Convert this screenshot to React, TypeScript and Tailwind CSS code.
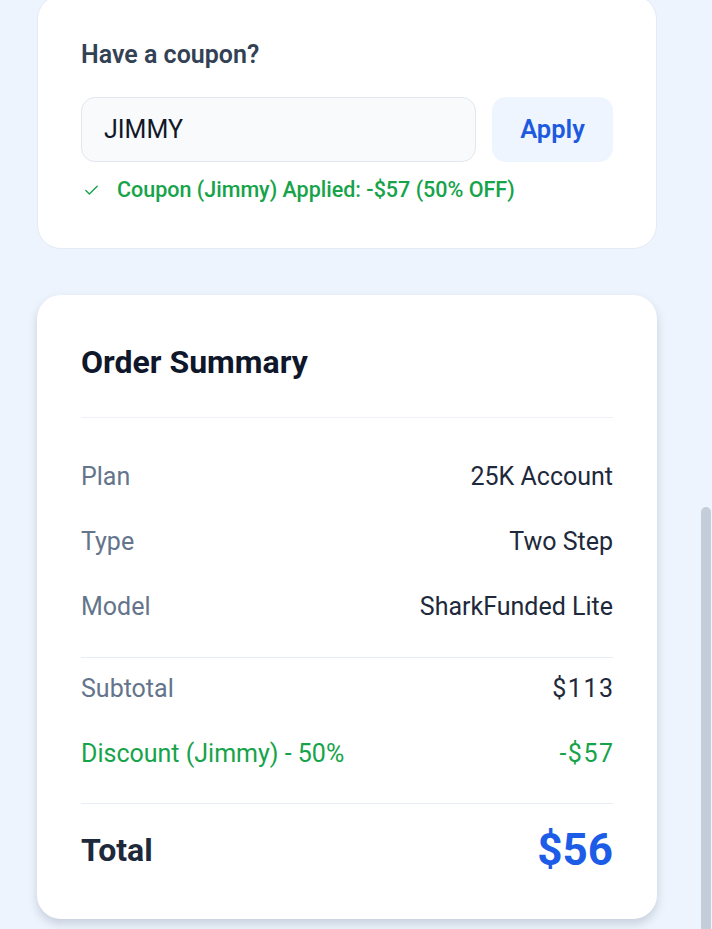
import { Check } from "lucide-react";

function Row({ label, value, tone = "default" }: { label: string, value: string, tone?: "default" | "green" }) {
  const green = tone === "green";
  return (
    <div className="flex justify-between items-center text-[25px] leading-[32px]">
      <p className={green ? "text-[#16a34a]" : "text-[#64748b]"}>{label}</p>
      <p className={green ? "text-[#16a34a]" : "text-[#1e293b]"}>{value}</p>
    </div>
  );
}

export default function App() {
  return (
    <div className="relative h-[929px] overflow-hidden bg-[#edf4fd] font-['Roboto',sans-serif]">
      <div className="flex flex-col gap-[46px] pl-[37px] w-[657px]">
        {/* coupon */}
        <div className="mt-[-5px] bg-white border border-[#e3ebf5] rounded-[24px] px-[43px] pt-[43px] pb-[44px]">
          <h3 className="text-[25px] leading-[32px] font-semibold text-[#334155]">Have a coupon?</h3>

          <div className="flex gap-4 mt-[26px]">
            <div className="flex-1 h-[65px] flex items-center px-[22px] bg-[#f8fafc] border border-[#e2e8f0] rounded-[14px]">
              <span className="text-[25px] text-[#111827]">JIMMY</span>
            </div>
            <button className="w-[121px] h-[65px] bg-[#eff5fe] rounded-[14px] text-[25.5px] font-semibold text-[#1d5ae0]">Apply</button>
          </div>

          <div className="flex items-center gap-[17px] mt-[14px] pl-[2px] text-[#16a34a]">
            <Check size={17} strokeWidth={2} />
            <p className="text-[21.5px] leading-[28px] font-medium">Coupon (Jimmy) Applied: -$57 (50% OFF)</p>
          </div>
        </div>

        {/* summary */}
        <div className="bg-white rounded-[24px] px-[44px] pt-[49px] pb-[45px] shadow-[0_5px_10px_rgba(100,116,139,0.28)]">
          <h2 className="text-[32px] leading-[36px] font-bold text-[#0f172a] pb-[37px] border-b border-[#eef2f6]">Order Summary</h2>

          <div className="flex flex-col gap-[33px] pt-[43px] pb-[34px] border-b border-[#e8edf3]">
            <Row label="Plan" value="25K Account" />
            <Row label="Type" value="Two Step" />
            <Row label="Model" value="SharkFunded Lite" />
          </div>

          <div className="flex flex-col gap-[33px] pt-[15px] pb-[33px] border-b border-[#e8edf3]">
            <div className="flex justify-between items-center text-[25px] leading-[32px]">
              <p className="text-[#64748b]">Subtotal</p>
              <p className="text-[#1e293b] tracking-[1.5px] mr-[-1.5px]">$113</p>
            </div>
            <div className="flex justify-between items-center text-[25px] leading-[32px] text-[#16a34a]">
              <p>Discount (Jimmy) - 50%</p>
              <p className="tracking-[1.5px] mr-[-1.5px]">-$57</p>
            </div>
          </div>

          <div className="flex justify-between items-center pt-[22px]">
            <p className="text-[32px] font-bold text-[#1e293b]">Total</p>
            <p className="text-[44px] leading-[48px] font-bold text-[#1d5ce6]">$56</p>
          </div>
        </div>
      </div>

      {/* scrollbar thumb */}
      <div className="absolute right-[1px] top-[507px] bottom-0 w-[10px] rounded-t-full bg-[#c3ceda]" />
    </div>
  );
}
